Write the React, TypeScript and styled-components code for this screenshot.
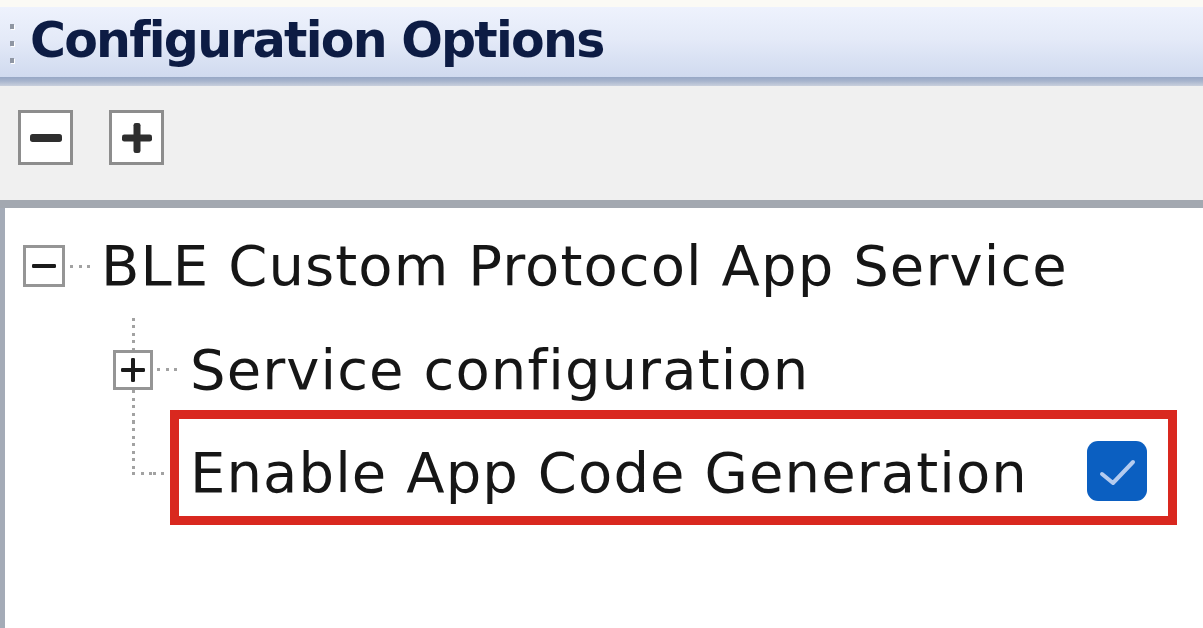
import React from "react";
import styled, { createGlobalStyle } from "styled-components";

const Global = createGlobalStyle`
  html, body { margin: 0; padding: 0; background: #ffffff; }
  body { width: 1203px; height: 628px; overflow: hidden; }
  #root { width: 1203px; height: 628px; }
`;

const Frame = styled.div`
  width: 1203px;
  height: 628px;
  display: flex;
  flex-direction: column;
  background: #fbfaf6;
`;

const TopStrip = styled.div`
  height: 7px;
  flex: none;
  background: #fbfaf5;
`;

const TitleBar = styled.div`
  height: 79px;
  flex: none;
  box-sizing: border-box;
  display: flex;
  align-items: center;
  padding: 0 0 9px 10px;
  gap: 16px;
  background: linear-gradient(
    to bottom,
    #eef2fd 0px,
    #e4eaf8 32px,
    #d0daef 70px,
    #97a7c5 70px,
    #a7b4cd 74px,
    #c9d0dd 79px
  );
`;

const Grip = styled.div`
  display: flex;
  flex-direction: column;
  gap: 12px;
  padding-top: 2px;
`;

const GripDot = styled.span`
  width: 4px;
  height: 5px;
  background: #8f96a3;
  box-shadow: 1px 1px 0 #ffffff;
`;

const Title = styled.h1`
  margin: -4px 0 0 0;
  font-family: "DejaVu Sans", Verdana, sans-serif;
  font-weight: bold;
  font-size: 49px;
  line-height: 49px;
  letter-spacing: -1.75px;
  color: #0d1c44;
`;

const Toolbar = styled.div`
  height: 122px;
  flex: none;
  display: flex;
  align-items: flex-start;
  gap: 36px;
  padding: 24px 0 0 18px;
  box-sizing: border-box;
  background: #f0f0f0;
  border-bottom: 8px solid #a3a8b0;
`;

const ToolButton = styled.button`
  width: 55px;
  height: 55px;
  padding: 0;
  margin: 0;
  display: flex;
  align-items: center;
  justify-content: center;
  background: #ffffff;
  border: 3px solid #8d8d8d;
  box-sizing: border-box;
  cursor: pointer;
`;

const TreePanel = styled.div`
  flex: 1;
  background: #ffffff;
  border-left: 5px solid #a4abb7;
  padding-top: 6px;
  display: flex;
  flex-direction: column;
`;

const Row = styled.div<{ $h: number; $indent: number }>`
  height: ${(p) => p.$h}px;
  flex: none;
  display: flex;
  align-items: stretch;
  padding-left: ${(p) => p.$indent}px;
`;

const Expander = styled.div<{ $size: number }>`
  width: ${(p) => p.$size}px;
  height: ${(p) => p.$size}px;
  flex: none;
  align-self: center;
  box-sizing: border-box;
  border: 3px solid #959595;
  background: #ffffff;
  display: flex;
  align-items: center;
  justify-content: center;
`;

const HDots = styled.div<{ $w: number; $ml: number }>`
  width: ${(p) => p.$w}px;
  height: 3px;
  margin-left: ${(p) => p.$ml}px;
  align-self: center;
  flex: none;
  background: repeating-linear-gradient(to right, #a2a2a2 0 3px, transparent 3px 8.5px);
`;

const VDots = styled.div`
  width: 3px;
  flex: 1;
  background: repeating-linear-gradient(to bottom, #a2a2a2 0 3px, transparent 3px 7.5px);
`;

const Connector = styled.div`
  width: 40px;
  flex: none;
  display: flex;
  flex-direction: column;
  align-items: center;
`;

const Half = styled.div`
  flex: 1;
  width: 100%;
  display: flex;
  flex-direction: column;
  align-items: center;
`;

const Knee = styled.div`
  height: 3px;
  width: 21.5px;
  align-self: flex-end;
  background: repeating-linear-gradient(to right, #a2a2a2 0 3px, transparent 3px 8.5px);
`;

const Label = styled.span<{ $ml?: number }>`
  align-self: center;
  margin-left: ${(p) => p.$ml ?? 0}px;
  font-family: "DejaVu Sans", Verdana, sans-serif;
  font-size: 56px;
  line-height: 56px;
  letter-spacing: 1.1px;
  color: #161616;
  white-space: nowrap;
`;

const Highlight = styled.div`
  align-self: flex-end;
  width: 1007px;
  height: 115px;
  flex: none;
  box-sizing: border-box;
  border: 9px solid #d9281f;
  padding: 10px 21px 0 11px;
  display: flex;
  align-items: center;
`;

const CheckBox = styled.span`
  width: 60px;
  height: 60px;
  margin: -4px 0 0 auto;
  flex: none;
  border-radius: 11px;
  background: #0b5fc1;
  display: flex;
  align-items: center;
  justify-content: center;
`;

const MinusGlyph = ({ w, t, color }: { w: number; t: number; color: string }) => (
  <svg width={w} height={w} viewBox={`0 0 ${w} ${w}`}>
    <rect x={0} y={(w - t) / 2} width={w} height={t} rx={t / 3} fill={color} />
  </svg>
);

const PlusGlyph = ({ w, t, color }: { w: number; t: number; color: string }) => (
  <svg width={w} height={w} viewBox={`0 0 ${w} ${w}`}>
    <rect x={0} y={(w - t) / 2} width={w} height={t} rx={t / 3} fill={color} />
    <rect x={(w - t) / 2} y={0} width={t} height={w} rx={t / 3} fill={color} />
  </svg>
);

const CheckMark = () => (
  <svg width="60" height="60" viewBox="0 0 60 60">
    <path
      d="M15 33 L26 42 L46 21"
      fill="none"
      stroke="#b4cbef"
      strokeWidth="4"
      strokeLinecap="round"
      strokeLinejoin="round"
    />
  </svg>
);

export default function App() {
  return (
    <>
      <Global />
      <Frame>
        <TopStrip />
        <TitleBar>
          <Grip>
            <GripDot />
            <GripDot />
            <GripDot />
          </Grip>
          <Title>Configuration Options</Title>
        </TitleBar>
        <Toolbar>
          <ToolButton aria-label="Collapse all">
            <MinusGlyph w={32} t={8} color="#2e2e2e" />
          </ToolButton>
          <ToolButton aria-label="Expand all">
            <PlusGlyph w={30} t={7} color="#2e2e2e" />
          </ToolButton>
        </Toolbar>
        <TreePanel>
          <Row $h={104} $indent={18}>
            <Expander $size={42}>
              <MinusGlyph w={24} t={4} color="#1a1a1a" />
            </Expander>
            <HDots $w={23} $ml={5} />
            <Label $ml={8}>BLE Custom Protocol App Service</Label>
          </Row>
          <Row $h={103} $indent={108}>
            <Connector>
              <VDots />
              <Expander $size={40}>
                <PlusGlyph w={24} t={4} color="#1a1a1a" />
              </Expander>
              <VDots />
            </Connector>
            <HDots $w={23} $ml={4} />
            <Label $ml={10}>Service configuration</Label>
          </Row>
          <Row $h={104} $indent={108}>
            <Connector>
              <Half>
                <VDots />
              </Half>
              <Knee />
              <Half />
            </Connector>
            <HDots $w={17} $ml={0} />
            <Highlight>
              <Label>Enable App Code Generation</Label>
              <CheckBox role="checkbox" aria-checked="true">
                <CheckMark />
              </CheckBox>
            </Highlight>
          </Row>
        </TreePanel>
      </Frame>
    </>
  );
}
